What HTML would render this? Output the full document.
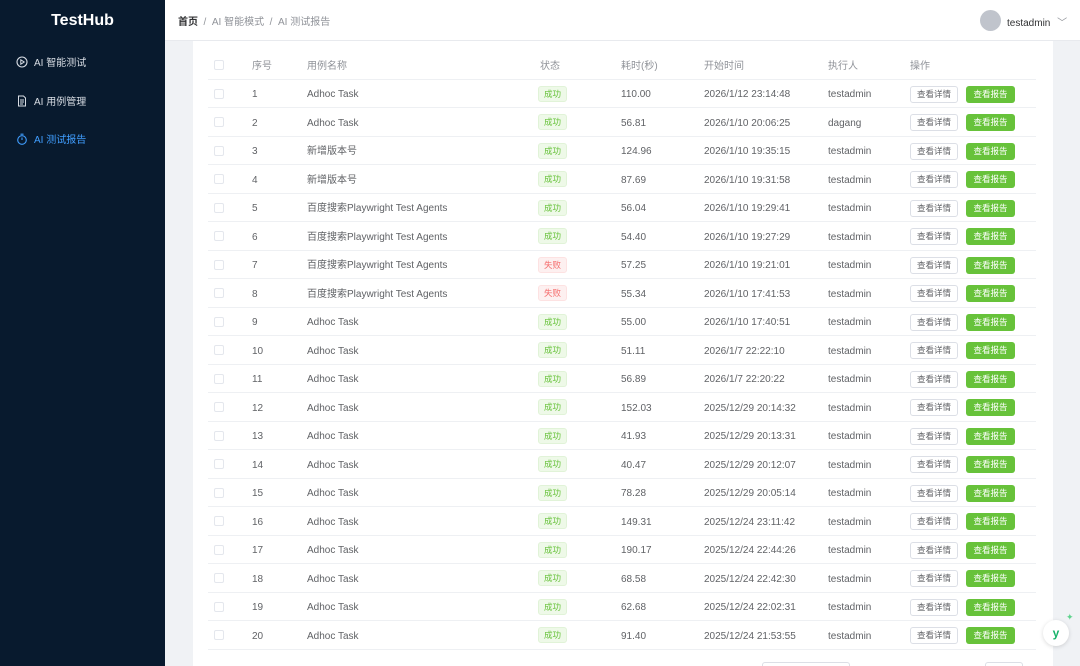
<!DOCTYPE html><html><head><meta charset="utf-8"><style>
*{margin:0;padding:0;box-sizing:border-box}
html{width:1080px;height:666px;overflow:hidden}
body{width:1080px;height:666px;overflow:hidden;background:#f0f2f5;font-family:"Liberation Sans","Noto Sans CJK SC",sans-serif;font-size:10px;color:#606266;position:relative}
.side{position:absolute;left:0;top:0;width:165px;height:666px;background:#081a2e}
.logo{position:absolute;left:0;width:165px;top:12px;text-align:center;color:#fff;font-size:16px;font-weight:bold}
.mi{position:absolute;left:16px;color:#d8dde4;font-size:10px;display:flex;align-items:center;gap:6px}
.hdr{position:absolute;left:165px;top:0;width:915px;height:41px;background:#fff;border-bottom:1px solid #e8eaee}
.card{position:absolute;left:193px;top:41px;width:860px;height:625px;background:#fff}
.r{position:absolute;left:208px;width:828px;height:28.5px;border-bottom:1px solid #eef0f3}
.r span{position:absolute;top:1.5px;line-height:28px;white-space:nowrap}
.r .cb{position:absolute;left:6px;top:9px;width:10px;height:10px;border:1px solid #e4e7ed;border-radius:2px}
.r .tag{left:330px;top:6px;height:16px;line-height:14px;padding:0 5px;font-size:8.5px;border-radius:3px;background:#eef9e8;color:#67c23a;border:1px solid #e1f3d8}
.r .f{background:#fdf0f0;color:#f56c6c;border-color:#fde2e2}
.r .b1{left:702px;top:6px;width:48px;height:17px;border:1px solid #dcdfe6;border-radius:3px;font-size:8.5px;text-align:center;line-height:15px;color:#606266}
.r .b2{left:758px;top:6px;width:49px;height:17px;background:#67c23a;border-radius:3px;font-size:8.5px;text-align:center;line-height:17px;color:#fff}
</style></head><body>
<div class="side">
<div class="logo">TestHub</div>
<div class="mi" style="top:54px"><svg width="12" height="12" viewBox="0 0 12 12"><circle cx="6" cy="6" r="5" fill="none" stroke="#d8dde4" stroke-width="1.1"/><path d="M4.8 3.8v4.4L8.2 6z" fill="none" stroke="#d8dde4" stroke-width="1"/></svg>AI 智能测试</div>
<div class="mi" style="top:93px"><svg width="12" height="12" viewBox="0 0 12 12"><path d="M2.5 1h5l2 2v8h-7z M4 5h4M4 7h4M4 9h3" fill="none" stroke="#d8dde4" stroke-width="1"/></svg>AI 用例管理</div>
<div class="mi" style="top:131px;color:#409eff"><svg width="12" height="12" viewBox="0 0 12 12"><circle cx="6" cy="7" r="4.3" fill="none" stroke="#409eff" stroke-width="1.1"/><path d="M4.5 1.2h3M6 4.5v2.5" stroke="#409eff" stroke-width="1.1"/></svg>AI 测试报告</div>
</div>
<div class="hdr">
<div style="position:absolute;left:13px;top:13px;font-size:10px;color:#909399"><b style="color:#303133">首页</b> &nbsp;/&nbsp; AI 智能模式 &nbsp;/&nbsp; AI 测试报告</div>
<div style="position:absolute;left:815px;top:10px;width:21px;height:21px;border-radius:50%;background:#c0c4cc"></div>
<div style="position:absolute;left:842px;top:14px;font-size:10px;color:#303133">testadmin <span style="color:#909399;margin-left:4px">﹀</span></div>
</div>
<div class="card"></div>
<div class="r" style="top:51px"><div class="cb"></div><span style="left:44px;color:#909399">序号</span><span style="left:99px;color:#909399">用例名称</span><span style="left:332px;color:#909399">状态</span><span style="left:413px;color:#909399">耗时(秒)</span><span style="left:496px;color:#909399">开始时间</span><span style="left:620px;color:#909399">执行人</span><span style="left:702px;color:#909399">操作</span></div>
<div class="r" style="top:79.5px"><div class="cb"></div><span style="left:44px">1</span><span style="left:99px">Adhoc Task</span><span class="tag">成功</span><span style="left:413px">110.00</span><span style="left:496px">2026/1/12 23:14:48</span><span style="left:620px">testadmin</span><span class="b1">查看详情</span><span class="b2">查看报告</span></div>
<div class="r" style="top:108px"><div class="cb"></div><span style="left:44px">2</span><span style="left:99px">Adhoc Task</span><span class="tag">成功</span><span style="left:413px">56.81</span><span style="left:496px">2026/1/10 20:06:25</span><span style="left:620px">dagang</span><span class="b1">查看详情</span><span class="b2">查看报告</span></div>
<div class="r" style="top:136.5px"><div class="cb"></div><span style="left:44px">3</span><span style="left:99px">新增版本号</span><span class="tag">成功</span><span style="left:413px">124.96</span><span style="left:496px">2026/1/10 19:35:15</span><span style="left:620px">testadmin</span><span class="b1">查看详情</span><span class="b2">查看报告</span></div>
<div class="r" style="top:165px"><div class="cb"></div><span style="left:44px">4</span><span style="left:99px">新增版本号</span><span class="tag">成功</span><span style="left:413px">87.69</span><span style="left:496px">2026/1/10 19:31:58</span><span style="left:620px">testadmin</span><span class="b1">查看详情</span><span class="b2">查看报告</span></div>
<div class="r" style="top:193.5px"><div class="cb"></div><span style="left:44px">5</span><span style="left:99px">百度搜索Playwright Test Agents</span><span class="tag">成功</span><span style="left:413px">56.04</span><span style="left:496px">2026/1/10 19:29:41</span><span style="left:620px">testadmin</span><span class="b1">查看详情</span><span class="b2">查看报告</span></div>
<div class="r" style="top:222px"><div class="cb"></div><span style="left:44px">6</span><span style="left:99px">百度搜索Playwright Test Agents</span><span class="tag">成功</span><span style="left:413px">54.40</span><span style="left:496px">2026/1/10 19:27:29</span><span style="left:620px">testadmin</span><span class="b1">查看详情</span><span class="b2">查看报告</span></div>
<div class="r" style="top:250.5px"><div class="cb"></div><span style="left:44px">7</span><span style="left:99px">百度搜索Playwright Test Agents</span><span class="tag f">失败</span><span style="left:413px">57.25</span><span style="left:496px">2026/1/10 19:21:01</span><span style="left:620px">testadmin</span><span class="b1">查看详情</span><span class="b2">查看报告</span></div>
<div class="r" style="top:279px"><div class="cb"></div><span style="left:44px">8</span><span style="left:99px">百度搜索Playwright Test Agents</span><span class="tag f">失败</span><span style="left:413px">55.34</span><span style="left:496px">2026/1/10 17:41:53</span><span style="left:620px">testadmin</span><span class="b1">查看详情</span><span class="b2">查看报告</span></div>
<div class="r" style="top:307.5px"><div class="cb"></div><span style="left:44px">9</span><span style="left:99px">Adhoc Task</span><span class="tag">成功</span><span style="left:413px">55.00</span><span style="left:496px">2026/1/10 17:40:51</span><span style="left:620px">testadmin</span><span class="b1">查看详情</span><span class="b2">查看报告</span></div>
<div class="r" style="top:336px"><div class="cb"></div><span style="left:44px">10</span><span style="left:99px">Adhoc Task</span><span class="tag">成功</span><span style="left:413px">51.11</span><span style="left:496px">2026/1/7 22:22:10</span><span style="left:620px">testadmin</span><span class="b1">查看详情</span><span class="b2">查看报告</span></div>
<div class="r" style="top:364.5px"><div class="cb"></div><span style="left:44px">11</span><span style="left:99px">Adhoc Task</span><span class="tag">成功</span><span style="left:413px">56.89</span><span style="left:496px">2026/1/7 22:20:22</span><span style="left:620px">testadmin</span><span class="b1">查看详情</span><span class="b2">查看报告</span></div>
<div class="r" style="top:393px"><div class="cb"></div><span style="left:44px">12</span><span style="left:99px">Adhoc Task</span><span class="tag">成功</span><span style="left:413px">152.03</span><span style="left:496px">2025/12/29 20:14:32</span><span style="left:620px">testadmin</span><span class="b1">查看详情</span><span class="b2">查看报告</span></div>
<div class="r" style="top:421.5px"><div class="cb"></div><span style="left:44px">13</span><span style="left:99px">Adhoc Task</span><span class="tag">成功</span><span style="left:413px">41.93</span><span style="left:496px">2025/12/29 20:13:31</span><span style="left:620px">testadmin</span><span class="b1">查看详情</span><span class="b2">查看报告</span></div>
<div class="r" style="top:450px"><div class="cb"></div><span style="left:44px">14</span><span style="left:99px">Adhoc Task</span><span class="tag">成功</span><span style="left:413px">40.47</span><span style="left:496px">2025/12/29 20:12:07</span><span style="left:620px">testadmin</span><span class="b1">查看详情</span><span class="b2">查看报告</span></div>
<div class="r" style="top:478.5px"><div class="cb"></div><span style="left:44px">15</span><span style="left:99px">Adhoc Task</span><span class="tag">成功</span><span style="left:413px">78.28</span><span style="left:496px">2025/12/29 20:05:14</span><span style="left:620px">testadmin</span><span class="b1">查看详情</span><span class="b2">查看报告</span></div>
<div class="r" style="top:507px"><div class="cb"></div><span style="left:44px">16</span><span style="left:99px">Adhoc Task</span><span class="tag">成功</span><span style="left:413px">149.31</span><span style="left:496px">2025/12/24 23:11:42</span><span style="left:620px">testadmin</span><span class="b1">查看详情</span><span class="b2">查看报告</span></div>
<div class="r" style="top:535.5px"><div class="cb"></div><span style="left:44px">17</span><span style="left:99px">Adhoc Task</span><span class="tag">成功</span><span style="left:413px">190.17</span><span style="left:496px">2025/12/24 22:44:26</span><span style="left:620px">testadmin</span><span class="b1">查看详情</span><span class="b2">查看报告</span></div>
<div class="r" style="top:564px"><div class="cb"></div><span style="left:44px">18</span><span style="left:99px">Adhoc Task</span><span class="tag">成功</span><span style="left:413px">68.58</span><span style="left:496px">2025/12/24 22:42:30</span><span style="left:620px">testadmin</span><span class="b1">查看详情</span><span class="b2">查看报告</span></div>
<div class="r" style="top:592.5px"><div class="cb"></div><span style="left:44px">19</span><span style="left:99px">Adhoc Task</span><span class="tag">成功</span><span style="left:413px">62.68</span><span style="left:496px">2025/12/24 22:02:31</span><span style="left:620px">testadmin</span><span class="b1">查看详情</span><span class="b2">查看报告</span></div>
<div class="r" style="top:621px"><div class="cb"></div><span style="left:44px">20</span><span style="left:99px">Adhoc Task</span><span class="tag">成功</span><span style="left:413px">91.40</span><span style="left:496px">2025/12/24 21:53:55</span><span style="left:620px">testadmin</span><span class="b1">查看详情</span><span class="b2">查看报告</span></div>
<div style="position:absolute;left:762px;top:662px;width:88px;height:10px;border:1px solid #dcdfe6;border-radius:3px"></div>
<div style="position:absolute;left:985px;top:662px;width:38px;height:10px;border:1px solid #dcdfe6;border-radius:3px"></div>
<div style="position:absolute;left:1043px;top:620px;width:26px;height:26px;border-radius:50%;background:#fff;box-shadow:0 1px 4px rgba(0,0,0,.15);text-align:center;line-height:26px;color:#16b36a;font-weight:bold;font-size:12px">y</div>
<div style="position:absolute;left:1066px;top:612px;color:#5fd38d;font-size:9px">✦</div>
</body></html>
